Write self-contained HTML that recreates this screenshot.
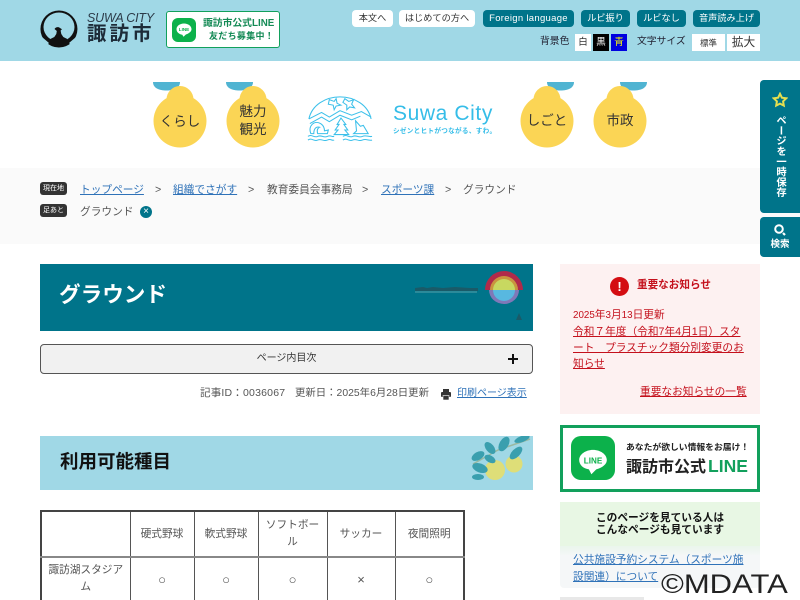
<!DOCTYPE html>
<html lang="ja"><head><meta charset="utf-8"><title>グラウンド</title>
<style>
*{box-sizing:border-box;margin:0;padding:0}
html,body{width:800px;height:600px;overflow:hidden;background:#fff}
body{position:relative;font-family:"Liberation Sans","Noto Sans CJK JP",sans-serif;color:#333;font-size:11px}
.a{position:absolute;white-space:nowrap}
.b{font-weight:700}
a{color:#2f72b8;text-decoration:underline}
.btn{position:absolute;top:10px;height:17px;border-radius:4px;font-size:9.2px;line-height:17px;text-align:center;white-space:nowrap}
.w{background:#fff;color:#333}.t{background:#00748a;color:#fff}
.pear{position:absolute;top:82px;width:54px;height:66px}
.pear svg{position:absolute;left:0;top:0}
.pear span{position:absolute;left:0;width:54px;text-align:center;color:#333;font-size:13.5px;line-height:18px}
.bc{font-size:10.7px;line-height:16px;color:#555}
.tag{position:absolute;left:40px;width:27px;height:13px;border-radius:3px;background:#333;color:#fff;font-size:7px;line-height:13px;text-align:center}
td{border:1px solid #555;text-align:center;vertical-align:middle;font-size:10.7px;color:#555;line-height:17px;padding:0 6px}
td.m{font-size:13px}
.h{border-bottom:2px solid #888}
</style></head><body>

<div class="a" style="left:0;top:0;width:800px;height:61px;background:#a0d8e6"></div>

<svg class="a" style="left:40px;top:10px" width="38" height="38" viewBox="0 0 38 38">
<path fill-rule="evenodd" d="M19 .5A18.500 18.500 0 1 1 18.900 37.500 18.500 18.500 0 0 1 19 .5zM19 2.500A15.500 14.500 0 1 0 19 31.500 15.500 14.500 0 0 0 19 2.500z" fill="#111"/>
<path d="M14.500 19c1-2 4-2.500 5.500-1l2 1.200-1.400 1.300 .7 3.500 2 3 4 2-4 6-2 2h-5l-2-2-4-6 4-2 2-3 .5-3z" fill="#111"/>
<path d="M7 35c-2-2-4-4-5-8l7 6zM31 35c2-2 4-4 5-8l-7 6z" fill="#a0d8e6"/>
</svg>
<div class="a" style="left:87px;top:11px;font-size:12.5px;font-style:italic;color:#2b3a48;line-height:14px;letter-spacing:-.2px">SUWA CITY</div>
<div class="a b" style="left:87px;top:23px;font-size:19.5px;color:#1d2b38;line-height:23px;letter-spacing:3px">諏訪市</div>

<div class="a" style="left:166px;top:11px;width:114px;height:37px;background:#fff;border:1.5px solid #12a05c;border-radius:3px"></div>
<div class="a" style="left:172px;top:18px;width:24px;height:24px;background:#0cb14b;border-radius:6px"></div>
<svg class="a" style="left:175px;top:21px" width="18" height="18" viewBox="0 0 18 18"><path d="M9 2.500C4.800 2.500 1.500 5 1.500 8.200c0 2.900 2.600 5 5.800 5.500l1.200 2 2.500-2.300c2.700-.9 5.500-2.800 5.500-5.200C16.500 5 13.200 2.500 9 2.500z" fill="#fff"/><text x="9" y="10" font-size="4.600" font-weight="700" text-anchor="middle" fill="#0cb14b" font-family="Liberation Sans">LINE</text></svg>
<div class="a b" style="left:203px;top:17px;font-size:9.8px;color:#148a55;line-height:13px">諏訪市公式LINE</div>
<div class="a b" style="left:209px;top:30px;font-size:9px;color:#148a55;line-height:13px;letter-spacing:.3px">友だち募集中！</div>

<div class="btn w" style="left:352px;width:41px">本文へ</div>
<div class="btn w" style="left:399px;width:76px">はじめての方へ</div>
<div class="btn t" style="left:483px;width:91px;font-size:9.500px;letter-spacing:.3px">Foreign language</div>
<div class="btn t" style="left:581px;width:49px">ルビ振り</div>
<div class="btn t" style="left:637px;width:49px">ルビなし</div>
<div class="btn t" style="left:693px;width:67px">音声読み上げ</div>

<div class="a" style="left:540px;top:35px;font-size:9.800px;line-height:14px;color:#223">背景色</div>
<div class="a" style="left:575px;top:34px;width:16px;height:17px;background:#fff;color:#333;font-size:9.500px;line-height:17px;text-align:center">白</div>
<div class="a" style="left:593px;top:34px;width:16px;height:17px;background:#000;color:#fff;font-size:9.500px;line-height:17px;text-align:center">黒</div>
<div class="a" style="left:611px;top:34px;width:16px;height:17px;background:#0000e0;color:#ff0;font-size:9.500px;line-height:17px;text-align:center">青</div>
<div class="a" style="left:637px;top:35px;font-size:9.800px;line-height:14px;color:#223">文字サイズ</div>
<div class="a" style="left:692px;top:34px;width:33px;height:17px;background:#fff;font-size:8.500px;line-height:18px;text-align:center">標準</div>
<div class="a" style="left:727px;top:34px;width:33px;height:17px;background:#fff;font-size:11.700px;line-height:17px;text-align:center">拡大</div>

<div class="pear" style="left:153px"><svg width="54" height="66" viewBox="0 0 54 66"><path d="M0 0h27c0 6-6 8.500-13.500 8.500S0 6 0 0z" fill="#50b4d2"/><g fill="#fbd555"><circle cx="27" cy="17.500" r="13.500"/><circle cx="27" cy="39" r="26.500"/><path d="M13.500 16C13.500 22 8 24 4 27H50C46 24 40.500 22 40.500 16z"/></g></svg><span style="top:31px">くらし</span></div>
<div class="pear" style="left:226px"><svg width="54" height="66" viewBox="0 0 54 66"><path d="M0 0h27c0 6-6 8.500-13.500 8.500S0 6 0 0z" fill="#50b4d2"/><g fill="#fbd555"><circle cx="27" cy="17.500" r="13.500"/><circle cx="27" cy="39" r="26.500"/><path d="M13.500 16C13.500 22 8 24 4 27H50C46 24 40.500 22 40.500 16z"/></g></svg><span style="top:21px">魅力<br>観光</span></div>
<div class="pear" style="left:520px"><svg width="54" height="66" viewBox="0 0 54 66"><path d="M27 0h27c0 6-6 8.500-13.500 8.500S27 6 27 0z" fill="#50b4d2"/><g fill="#fbd555"><circle cx="27" cy="17.500" r="13.500"/><circle cx="27" cy="39" r="26.500"/><path d="M13.500 16C13.500 22 8 24 4 27H50C46 24 40.500 22 40.500 16z"/></g></svg><span style="top:30px">しごと</span></div>
<div class="pear" style="left:593px"><svg width="54" height="66" viewBox="0 0 54 66"><path d="M27 0h27c0 6-6 8.500-13.500 8.500S27 6 27 0z" fill="#50b4d2"/><g fill="#fbd555"><circle cx="27" cy="17.500" r="13.500"/><circle cx="27" cy="39" r="26.500"/><path d="M13.500 16C13.500 22 8 24 4 27H50C46 24 40.500 22 40.500 16z"/></g></svg><span style="top:30px">市政</span></div>

<svg class="a" style="left:306px;top:95px" width="68" height="46" viewBox="0 0 70 50" preserveAspectRatio="none" fill="none" stroke="#3cc0ea" stroke-width="1.100">
<path d="M3 26C6 11 20 2 35 2s29 9 32 24"/>
<path d="M3 26l13-7 8 5 11-7 12 5 10-4 10 6"/><path d="M4 31l12-7 8 5 11-7 12 5 9-4"/>
<path d="M24 5l5 2 2-3 1 5 4 2-5 1-2 4-1-5-5-1z"/><path d="M40 4l4 3 5-2-2 5 3 4-5-1-3 3v-5l-4-3z"/>
<path d="M5 42c-3-8 3-15 10-11 3 2 4 5 4 8l4-1-1 4H12c-1-4 0-6 2-7-3-1-6 1-6 7z"/>
<path d="M36 25l5 7h-2l4 6h-3l4 5H29l4-5h-3l4-6h-2z"/><path d="M51 28l5 6 3-1 5 9H49l3-3z"/>
<path d="M2 45c4-3 6 2 10 0s6 2 10 0 4 1 7 0"/><path d="M2 49c4-3 6 2 10 0s6 2 10 0 4 1 7 0"/><path d="M38 45c4-3 6 2 10 0s6 2 10 0 6 1 10 0"/><path d="M38 49c4-3 6 2 10 0s6 2 10 0 6 1 10 0"/>
</svg>
<div class="a" style="left:393px;top:102px;font-size:21px;color:#35bde8;line-height:24px;letter-spacing:.6px">Suwa City</div>
<div class="a b" style="left:393px;top:127px;font-size:6.600px;color:#35bde8;line-height:9px;letter-spacing:.3px">シゼンとヒトがつながる、すわ。</div>

<div class="a" style="left:0;top:168px;width:800px;height:76px;background:#fafafa"></div>
<div class="tag" style="top:182px">現在地</div>
<div class="tag" style="top:204px">足あと</div>
<div class="a bc" style="left:80px;top:182px"><a href="#">トップページ</a></div>
<div class="a bc" style="left:155px;top:182px">&gt;</div>
<div class="a bc" style="left:173px;top:182px"><a href="#">組織でさがす</a></div>
<div class="a bc" style="left:248px;top:182px">&gt;</div>
<div class="a bc" style="left:267px;top:182px">教育委員会事務局</div>
<div class="a bc" style="left:362px;top:182px">&gt;</div>
<div class="a bc" style="left:381px;top:182px"><a href="#">スポーツ課</a></div>
<div class="a bc" style="left:445px;top:182px">&gt;</div>
<div class="a bc" style="left:463px;top:182px">グラウンド</div>
<div class="a bc" style="left:80px;top:204px">グラウンド</div>
<div class="a" style="left:140px;top:206px;width:12px;height:12px;border-radius:50%;background:#00748a;color:#fff;font-size:10px;line-height:11px;text-align:center">×</div>

<div class="a" style="left:40px;top:264px;width:493px;height:67px;background:#00748a"></div>
<div class="a b" style="left:59px;top:280px;font-size:21.600px;color:#fff;line-height:30px">グラウンド</div>
<svg class="a" style="left:412px;top:270px" width="115" height="54" viewBox="0 0 115 54">
<path d="M3 18l8-1 4 1 6-1 10 1 12-1 15 1 8 0v3H3z" fill="#1a5a68"/><rect x="3" y="21" width="62" height="2" fill="#2b8a9a"/>
<path d="M73 20a19 19 0 0 1 38 0z" fill="#b02a4a"/>
<path d="M77 20a15 14 0 0 0 30 0z" fill="#7f78b8"/>
<path d="M78 20a14 14 0 0 1 28 0z" fill="#c9953f"/>
<path d="M81 20a11 11 0 0 1 22 0z" fill="#c8d860"/><path d="M81 20a11 11 0 0 0 22 0z" fill="#58b8e0"/>
<path d="M104 50l3-7 3 7z" fill="#1a5a68"/></svg>

<div class="a" style="left:40px;top:344px;width:493px;height:30px;background:#f1f1f1;border:1px solid #555;border-radius:4px;font-size:10px;line-height:27px;text-align:center;color:#333">ページ内目次</div>
<div class="a" style="left:508px;top:358px;width:10px;height:2px;background:#111"></div>
<div class="a" style="left:512px;top:354px;width:2px;height:10px;background:#111"></div>

<div class="a" style="left:200px;top:386px;font-size:10.500px;line-height:15px;color:#555;letter-spacing:.2px">記事ID：0036067</div>
<div class="a" style="left:295px;top:386px;font-size:10.400px;line-height:15px;color:#555">更新日：2025年6月28日更新</div>
<svg class="a" style="left:440px;top:389px" width="12" height="11" viewBox="0 0 12 11"><rect x="3" y="0" width="6" height="3" fill="#333"/><rect x="1" y="3" width="10" height="5" rx="1" fill="#333"/><rect x="3" y="6.500" width="6" height="4.500" fill="#333" stroke="#fff" stroke-width=".6"/></svg>
<div class="a" style="left:457px;top:386px;font-size:10px;line-height:15px"><a href="#">印刷ページ表示</a></div>

<div class="a" style="left:40px;top:436px;width:493px;height:54px;background:#a0d8e6"></div>
<div class="a b" style="left:60px;top:449px;font-size:18.500px;color:#111;line-height:26px">利用可能種目</div>
<svg class="a" style="left:470px;top:436px" width="62" height="46" viewBox="0 0 62 46">
<path d="M3 28L28 14 60 3" stroke="#9ab8a0" stroke-width="1.500" fill="none"/>
<circle cx="25" cy="34" r="10" fill="#dede78"/><circle cx="44" cy="28" r="8.500" fill="#dede78"/>
<g fill="#3a9fae"><ellipse cx="8" cy="20" rx="7" ry="4" transform="rotate(-30 8 20)"/><ellipse cx="10" cy="32" rx="8" ry="4.500" transform="rotate(20 10 32)"/><ellipse cx="20" cy="12" rx="7" ry="4" transform="rotate(50 20 12)"/><ellipse cx="34" cy="8" rx="8" ry="4.500" transform="rotate(-60 34 8)"/><ellipse cx="46" cy="17" rx="8" ry="4" transform="rotate(-45 46 17)"/><ellipse cx="52" cy="3" rx="8" ry="3" transform="rotate(-20 52 3)"/><ellipse cx="8" cy="41" rx="6" ry="3"/><ellipse cx="20" cy="23" rx="6" ry="3.500" transform="rotate(30 20 23)"/></g></svg>

<table class="a" style="left:40px;top:510px;width:423px;table-layout:fixed;border-collapse:collapse;border:2px solid #444;white-space:normal">
<colgroup><col style="width:89px"><col style="width:64px"><col style="width:64px"><col style="width:69px"><col style="width:68px"><col style="width:69px"></colgroup>
<tr style="height:46px"><td class="h"></td><td class="h">硬式野球</td><td class="h">軟式野球</td><td class="h">ソフトボール</td><td class="h">サッカー</td><td class="h">夜間照明</td></tr>
<tr style="height:44px"><td>諏訪湖スタジアム</td><td class="m">○</td><td class="m">○</td><td class="m">○</td><td class="m">×</td><td class="m">○</td></tr>
</table>

<div class="a" style="left:560px;top:264px;width:200px;height:150px;background:#fdf1f1"></div>
<div class="a" style="left:610px;top:277px;width:19px;height:19px;border-radius:50%;background:#d40d12;color:#fff;font-size:13px;font-weight:700;line-height:19px;text-align:center">!</div>
<div class="a b" style="left:637px;top:277px;font-size:10.600px;color:#c4101c;line-height:17px">重要なお知らせ</div>
<div class="a" style="left:573px;top:307px;font-size:10.700px;line-height:16px;color:#c4101c"><span style="font-size:9.800px">2025</span>年<span style="font-size:9.800px">3</span>月<span style="font-size:9.800px">13</span>日更新<br><a href="#" style="color:#c4101c">令和７年度（令和7年4月1日）スタ<br>ート　プラスチック類分別変更のお<br>知らせ</a></div>
<div class="a" style="left:640px;top:384px;font-size:10.700px;line-height:16px"><a href="#" style="color:#c4101c">重要なお知らせの一覧</a></div>

<div class="a" style="left:560px;top:425px;width:200px;height:67px;background:#fff;border:3px solid #12a05c"></div>
<div class="a" style="left:571px;top:436px;width:44px;height:44px;background:#0cb14b;border-radius:10px"></div>
<svg class="a" style="left:578px;top:449px" width="30" height="26" viewBox="0 0 36 32"><path d="M18 1C9 1 1 6.500 1 13.500c0 6 5 10.500 12 11.500l3 6 6-6c6-1.500 13-5.500 13-11.500C35 6.500 27 1 18 1z" fill="#fff"/><text x="18" y="18" font-size="10" font-weight="700" text-anchor="middle" fill="#0cb14b" font-family="Liberation Sans">LINE</text></svg>
<div class="a b" style="left:626px;top:441px;font-size:8.800px;color:#222;line-height:13px">あなたが欲しい情報をお届け！</div>
<div class="a b" style="left:626px;top:455px;font-size:16px;color:#222;line-height:22px">諏訪市公式<span style="color:#12a05c;font-size:17.500px;margin-left:2px">LINE</span></div>

<div class="a" style="left:560px;top:502px;width:200px;height:46px;background:#e8f7e4"></div>
<div class="a" style="left:560px;top:546px;width:200px;height:42px;background:linear-gradient(#eaf6ec,#f5f7f8 10px);border-radius:0 0 4px 4px"></div>
<div class="a b" style="left:560px;top:512px;width:200px;text-align:center;font-size:10.700px;line-height:12px;color:#111">このページを見ている人は<br>こんなページも見ています</div>
<div class="a" style="left:573px;top:552px;font-size:10.700px;line-height:16.500px"><a href="#">公共施設予約システム（スポーツ施<br>設関連）について</a></div>
<div class="a" style="left:560px;top:597px;width:84px;height:3px;background:#e8e8e8"></div>

<div class="a" style="left:661px;top:568px;font-size:26.500px;line-height:32px;color:#222;transform:scaleX(1.17);transform-origin:left center">©MDATA</div>

<div class="a" style="left:760px;top:80px;width:40px;height:133px;background:#00748a;border-radius:4px 0 0 4px"></div>
<svg class="a" style="left:772px;top:92px" width="16" height="16" viewBox="0 0 16 16"><path d="M8 1.800l1.900 3.900 4.300.6-3.100 3 .7 4.300L8 11.600l-3.800 2 .7-4.300-3.100-3 4.300-.6z" fill="none" stroke="#e6df50" stroke-width="2"/></svg>
<div class="a b" style="left:772px;top:115px;width:14px;font-size:10.300px;color:#fff;line-height:14px;white-space:normal;writing-mode:vertical-rl;height:90px">ページを一時保存</div>
<div class="a" style="left:760px;top:217px;width:40px;height:40px;background:#00748a;border-radius:4px 0 0 4px"></div>
<svg class="a" style="left:773px;top:223px" width="15" height="14" viewBox="0 0 15 14"><circle cx="6" cy="6" r="3.800" fill="none" stroke="#fff" stroke-width="2"/><path d="M10 10l2 2" stroke="#fff" stroke-width="2.200"/></svg>
<div class="a b" style="left:760px;top:238px;width:40px;text-align:center;font-size:9.500px;color:#fff;line-height:14px">検索</div>

</body></html>
